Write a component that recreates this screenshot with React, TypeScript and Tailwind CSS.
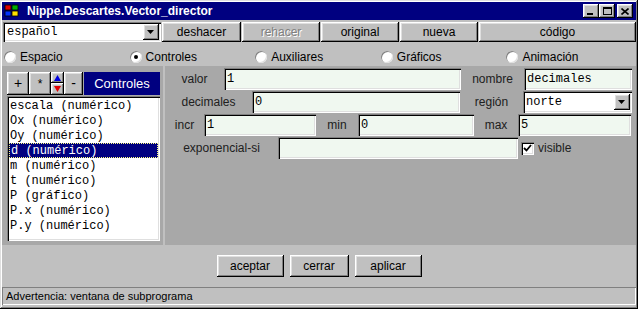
import React from "react";

const raised =
  "bg-[#c0c0c0] shadow-[inset_-1px_-1px_0_#000,inset_1px_1px_0_#fff,inset_-2px_-2px_0_#808080,inset_2px_2px_0_#dfdfdf]";
const sunken =
  "shadow-[inset_1px_1px_0_#808080,inset_2px_2px_0_#000,inset_-1px_-1px_0_#fff,inset_-2px_-2px_0_#dfdfdf]";
const mono = "font-['Liberation_Mono',monospace]";

function Radio({ label, checked }: { label: string; checked?: boolean }) {
  return (
    <div className="flex items-center gap-[4px]">
      <div className="w-[12px] h-[12px] rounded-full bg-white flex items-center justify-center shadow-[inset_1px_1px_0_#808080,inset_-1px_-1px_0_#dfdfdf]">
        {checked && <div className="w-[4px] h-[4px] rounded-full bg-black" />}
      </div>
      <span>{label}</span>
    </div>
  );
}

function Field({ w, value }: { w: number; value?: string }) {
  return (
    <div
      className={`h-full bg-[#f0f8f0] ${sunken} flex items-center pl-[3px] ${mono} text-[12px] text-black`}
      style={{ width: w }}
    >
      {value}
    </div>
  );
}

function Label({ w, text }: { w: number; text: string }) {
  return (
    <div className="h-full flex items-center justify-center text-[#202020]" style={{ width: w }}>
      {text}
    </div>
  );
}

function DropArrow() {
  return (
    <div className={`w-[16px] h-[16px] ${raised} flex items-center justify-center`}>
      <svg width="8" height="5" viewBox="0 0 8 5">
        <path d="M0 0h7L3.5 4z" fill="#000" />
      </svg>
    </div>
  );
}

function WinLogo() {
  return (
    <svg width="16" height="16" viewBox="0 0 16 16">
      <rect x="1" y="2" width="6" height="5" fill="#e00000" stroke="#000" strokeWidth="0.8" />
      <rect x="8" y="2" width="6" height="5" fill="#00b000" stroke="#000" strokeWidth="0.8" />
      <rect x="1" y="8" width="6" height="5" fill="#0030ff" stroke="#000" strokeWidth="0.8" />
      <rect x="8" y="8" width="6" height="5" fill="#ffe000" stroke="#000" strokeWidth="0.8" />
    </svg>
  );
}

function CapBtn({ children, className = "" }: { children: React.ReactNode; className?: string }) {
  return (
    <div className={`w-[16px] h-[14px] ${raised} flex items-center justify-center ${className}`}>
      {children}
    </div>
  );
}

const items = [
  "escala (numérico)",
  "Ox (numérico)",
  "Oy (numérico)",
  "d (numérico)",
  "m (numérico)",
  "t (numérico)",
  "P (gráfico)",
  "P.x (numérico)",
  "P.y (numérico)",
];

export default function App() {
  return (
    <div className="w-[638px] h-[309px] bg-[#c0c0c0] p-[2px] flex flex-col font-['Liberation_Sans',Arial,sans-serif] text-[12px] text-black shadow-[inset_-1px_-1px_0_#000,inset_1px_1px_0_#dfdfdf,inset_-2px_-2px_0_#808080,inset_2px_2px_0_#fff] overflow-hidden">
      {/* Title bar */}
      <div className="h-[18px] bg-[#000080] flex items-center pl-[2px] pr-[3px] shrink-0">
        <WinLogo />
        <span className="ml-[7px] text-white font-bold text-[12px] leading-none">
          Nippe.Descartes.Vector_director
        </span>
        <div className="ml-auto flex items-center">
          <CapBtn>
            <div className="w-[6px] h-[2px] bg-black mt-[6px] -ml-[2px]" />
          </CapBtn>
          <CapBtn>
            <div className="w-[9px] h-[8px] border border-black border-t-2" />
          </CapBtn>
          <CapBtn className="ml-[2px]">
            <svg width="8" height="7" viewBox="0 0 8 7">
              <path d="M0.5 0.5L7.5 6.5M7.5 0.5L0.5 6.5" stroke="#000" strokeWidth="1.6" />
            </svg>
          </CapBtn>
        </div>
      </div>

      {/* Toolbar row */}
      <div className="h-[20px] mt-[2px] flex shrink-0">
        <div className={`w-[158px] ml-[1px] h-full bg-white ${sunken} flex items-center pl-[4px] pr-[2px]`}>
          <span className={`${mono} text-[12px]`}>español</span>
          <div className="ml-auto">
            <DropArrow />
          </div>
        </div>
        <div className={`w-[79px] ml-[1px] h-full ${raised} flex items-center justify-center`}>deshacer</div>
        <div className={`w-[78px] ml-[1px] h-full ${raised} flex items-center justify-center text-[#808080] [text-shadow:1px_1px_0_#fff]`}>
          rehacer
        </div>
        <div className={`w-[78px] ml-[1px] h-full ${raised} flex items-center justify-center`}>original</div>
        <div className={`w-[78px] ml-[1px] h-full ${raised} flex items-center justify-center`}>nueva</div>
        <div className={`w-[157px] ml-[1px] h-full ${raised} flex items-center justify-center`}>código</div>
      </div>

      {/* Radio row */}
      <div className="h-[24px] grid grid-cols-5 w-[630px] pl-[2px] pt-[5px] items-center shrink-0">
        <Radio label="Espacio" />
        <Radio label="Controles" checked />
        <Radio label="Auxiliares" />
        <Radio label="Gráficos" />
        <Radio label="Animación" />
      </div>

      {/* Panels */}
      <div className="h-[179px] flex gap-[2px] shrink-0">
        {/* Left panel */}
        <div className="w-[161px] h-full bg-[#a8a8a8] pl-[5px] pt-[6px] pr-[3px]">
          <div className="flex h-[23px]">
            <div className={`w-[22px] h-full ${raised} flex items-center justify-center text-[14px]`}>+</div>
            <div className={`w-[22px] h-full ${raised} flex items-center justify-center text-[12px]`}>*</div>
            <div className="w-[13px] h-full flex flex-col">
              <div className={`h-[11px] ${raised} flex items-center justify-center`}>
                <svg width="7" height="6" viewBox="0 0 7 6">
                  <path d="M3.5 0L7 6H0z" fill="#0000e0" />
                </svg>
              </div>
              <div className={`h-[12px] ${raised} flex items-center justify-center`}>
                <svg width="7" height="6" viewBox="0 0 7 6">
                  <path d="M0 0h7L3.5 6z" fill="#e00000" />
                </svg>
              </div>
            </div>
            <div className={`w-[19px] h-full ${raised} flex items-center justify-center text-[14px]`}>-</div>
            <div className="flex-1 h-full bg-[#000080] text-white text-[13px] flex items-center justify-center ml-[1px]">
              Controles
            </div>
          </div>
          <div className={`mt-[1px] h-[145px] bg-white ${sunken} pl-[2px] pt-[2px] ${mono} text-[12px]`}>
            {items.map((it, i) => (
              <div
                key={it}
                className={`h-[15px] flex items-center pl-[1px] whitespace-pre ${
                  i === 3 ? "bg-[#000080] text-white border border-dotted border-[#ffff80] mr-[2px]" : ""
                }`}
              >
                {it}
              </div>
            ))}
          </div>
        </div>

        {/* Right panel */}
        <div className="flex-1 h-full bg-[#a8a8a8] pt-[2px] flex flex-col gap-[1px] text-[12px]">
          <div className="h-[22px] flex">
            <Label w={59} text="valor" />
            <Field w={237} value="1" />
            <Label w={63} text="nombre" />
            <Field w={108} value="decimales" />
          </div>
          <div className="h-[22px] flex">
            <Label w={87} text="decimales" />
            <Field w={208} value="0" />
            <Label w={63} text="región" />
            <div className={`w-[109px] h-full bg-white ${sunken} flex items-center pl-[3px] pr-[2px]`}>
              <span className={`${mono} text-[12px]`}>norte</span>
              <div className="ml-auto">
                <DropArrow />
              </div>
            </div>
          </div>
          <div className="h-[22px] flex">
            <Label w={39} text="incr" />
            <Field w={112} value="1" />
            <Label w={42} text="min" />
            <Field w={116} value="0" />
            <Label w={44} text="max" />
            <Field w={113} value="5" />
          </div>
          <div className="h-[22px] flex items-center">
            <Label w={113} text="exponencial-si" />
            <Field w={240} />
            <div className={`ml-[3px] w-[13px] h-[13px] bg-white ${sunken} flex items-center justify-center`}>
              <svg width="9" height="8" viewBox="0 0 9 8">
                <path d="M1 4L3.5 6.5L8 1" stroke="#000" strokeWidth="1.8" fill="none" />
              </svg>
            </div>
            <span className="ml-[4px] text-[#202020]">visible</span>
          </div>
        </div>
      </div>

      {/* Bottom buttons */}
      <div className="h-[42px] flex items-center justify-center gap-[6px] shrink-0">
        <div className={`w-[67px] h-[22px] ${raised} flex items-center justify-center`}>aceptar</div>
        <div className={`w-[59px] h-[22px] ${raised} flex items-center justify-center`}>cerrar</div>
        <div className={`w-[67px] h-[22px] ${raised} flex items-center justify-center`}>aplicar</div>
      </div>

      {/* Status bar */}
      <div className="h-[18px] shadow-[inset_1px_1px_0_#808080,inset_-1px_-1px_0_#fff] flex items-center pl-[4px] text-[11px] shrink-0">
        Advertencia: ventana de subprograma
      </div>
    </div>
  );
}
